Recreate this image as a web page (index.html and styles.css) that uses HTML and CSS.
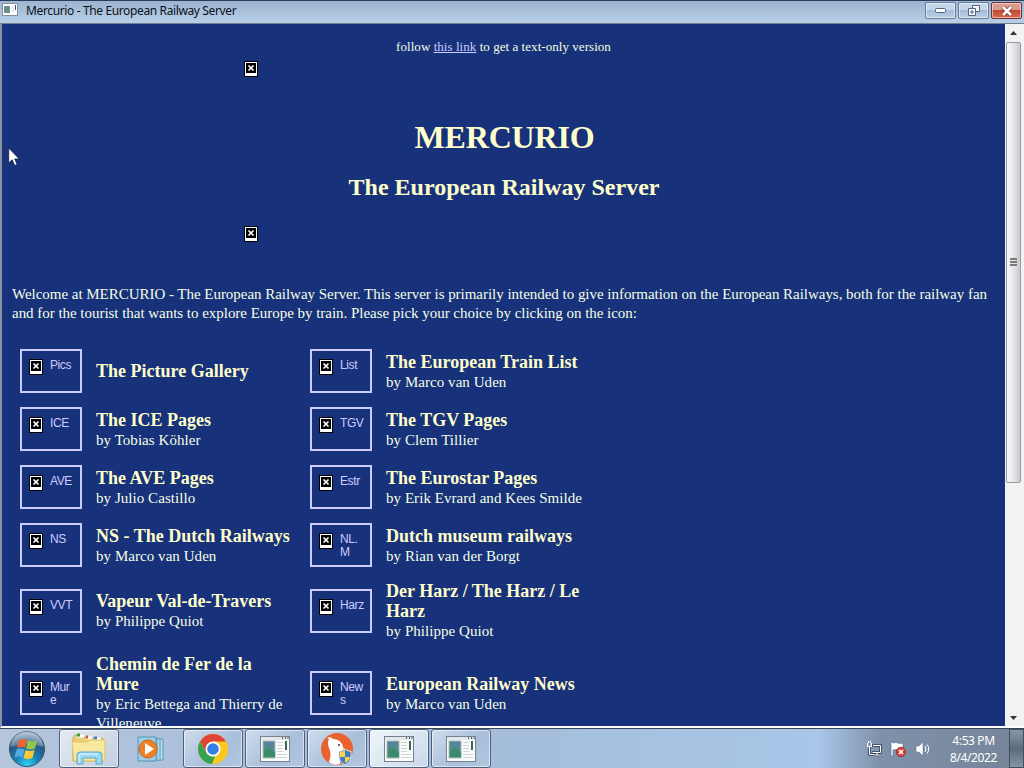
FILE: index.html
```html
<!DOCTYPE html>
<html lang="en">
<head>
    <meta charset="UTF-8">
    <meta name="viewport" content="width=device-width, initial-scale=1.0">
    <title>Mercurio - The European Railway Server</title>
    <link rel="stylesheet" href="styles.css">
</head>
<body>
    <!-- shared icons -->
    <svg class="defs" width="0" height="0">
        <defs>
            <linearGradient id="photo" x1="0" y1="0" x2="0" y2="1">
                <stop offset="0" stop-color="#587fa0"/>
                <stop offset="1" stop-color="#4b9a78"/>
            </linearGradient>
            <symbol id="window" viewBox="0 0 30 26">
                <rect x=".5" y=".5" width="29" height="25" fill="#fafbfb" stroke="#77828c"/>
                <path d="M1 2.500H29" stroke="#e3e8ec" stroke-width="3"/>
                <path d="M22 2h1M25 2h1M27.500 2h1" stroke="#333" stroke-width="1.500"/>
                <rect x="3" y="5" width="12" height="17" fill="url(#photo)" stroke="#a6bab6"/>
                <path d="M4 15l5-4 6 5v5H4z" fill="#3d8a6b"/>
                <path d="M17 6.500h6M17 9.500h6M17 12.500h6M17 15.500h6M17 18.500h10M17 21.500h10" stroke="#cfd3d6"/>
                <rect x="25" y="5" width="2" height="9" fill="#3e6558"/>
            </symbol>
            <symbol id="broken" viewBox="0 0 14 16">
                <path fill="#000" d="M0 0h14v16H0z"/>
                <path fill="#fff" d="M1 1h12v14H1z"/>
                <path fill="#000" d="M2 2h10v10H2z"/>
                <path d="M4.500 4.500l5 5M9.500 4.500l-5 5" stroke="#fff" stroke-width="1.700"/>
            </symbol>
        </defs>
    </svg>

    <div class="titlebar">
        <svg class="app-icon" width="16" height="13" viewBox="0 0 16 13"><rect x=".5" y=".5" width="15" height="12" fill="#fff" stroke="#8390a0"/><rect x="2" y="3" width="6" height="7" fill="#6d8f90"/><path d="M10 4h2M10 6h2M10 8h2" stroke="#ccd"/><path d="M13.500 2v5" stroke="#456"/></svg>
        <span class="title">Mercurio - The European Railway Server</span>
        <div class="controls">
            <span class="control"><svg width="12" height="6"><rect x=".5" y=".5" width="10" height="4" rx="1" fill="#fff" stroke="#53647c"/></svg></span>
            <span class="control"><svg width="12" height="11" fill="#f4f8fc" stroke="#53647c"><path d="M4.500.5h7v6h-7z"/><path d="M.5 3.500h7v7h-7z"/><path d="M3 6h2v2H3z"/></svg></span>
            <span class="control close"><svg width="12" height="10" viewBox="0 0 12 10"><path d="M2 1l8 8M10 1L2 9" stroke="#6f3637" stroke-width="4"/><path d="M2 1l8 8M10 1L2 9" stroke="#fff" stroke-width="2.500"/></svg></span>
        </div>
    </div>

    <div class="viewport">
        <div class="page">
            <p class="text-only">follow <a href="#">this link</a> to get a text-only version</p>
            <div class="banner">
                <svg class="broken" width="14" height="16"><use href="#broken"/></svg>
                <h1>MERCURIO</h1>
                <h2>The European Railway Server</h2>
                <svg class="broken" width="14" height="16"><use href="#broken"/></svg>
            </div>
            <p class="intro">Welcome at MERCURIO - The European Railway Server. This server is primarily intended to give information on the European Railways, both for the railway fan<br>and for the tourist that wants to explore Europe by train. Please pick your choice by clicking on the icon:</p>

            <div class="links">
                <a class="pic" href="#"><svg width="14" height="16"><use href="#broken"/></svg><span>Pics</span></a>
                <div><h3>The Picture Gallery</h3></div>
                <a class="pic" href="#"><svg width="14" height="16"><use href="#broken"/></svg><span>List</span></a>
                <div class="entry"><h3>The European Train List</h3><p>by Marco van Uden</p></div>

                <a class="pic" href="#"><svg width="14" height="16"><use href="#broken"/></svg><span>ICE</span></a>
                <div class="entry"><h3>The ICE Pages</h3><p>by Tobias Köhler</p></div>
                <a class="pic" href="#"><svg width="14" height="16"><use href="#broken"/></svg><span>TGV</span></a>
                <div class="entry"><h3>The TGV Pages</h3><p>by Clem Tillier</p></div>

                <a class="pic" href="#"><svg width="14" height="16"><use href="#broken"/></svg><span>AVE</span></a>
                <div class="entry"><h3>The AVE Pages</h3><p>by Julio Castillo</p></div>
                <a class="pic" href="#"><svg width="14" height="16"><use href="#broken"/></svg><span>Estr</span></a>
                <div class="entry"><h3>The Eurostar Pages</h3><p>by Erik Evrard and Kees Smilde</p></div>

                <a class="pic" href="#"><svg width="14" height="16"><use href="#broken"/></svg><span>NS</span></a>
                <div class="entry"><h3>NS - The Dutch Railways</h3><p>by Marco van Uden</p></div>
                <a class="pic" href="#"><svg width="14" height="16"><use href="#broken"/></svg><span>NL.<br>M</span></a>
                <div class="entry"><h3>Dutch museum railways</h3><p>by Rian van der Borgt</p></div>

                <a class="pic" href="#"><svg width="14" height="16"><use href="#broken"/></svg><span>VVT</span></a>
                <div><h3>Vapeur Val-de-Travers</h3><p>by Philippe Quiot</p></div>
                <a class="pic" href="#"><svg width="14" height="16"><use href="#broken"/></svg><span>Harz</span></a>
                <div><h3>Der Harz / The Harz / Le<br>Harz</h3><p>by Philippe Quiot</p></div>

                <a class="pic" href="#"><svg width="14" height="16"><use href="#broken"/></svg><span>Mur<br>e</span></a>
                <div><h3>Chemin de Fer de la<br>Mure</h3><p>by Eric Bettega and Thierry de<br>Villeneuve</p></div>
                <a class="pic" href="#"><svg width="14" height="16"><use href="#broken"/></svg><span>New<br>s</span></a>
                <div class="entry"><h3>European Railway News</h3><p>by Marco van Uden</p></div>
            </div>
        </div>
        <div class="scrollbar">
            <svg class="arrow" width="7" height="4"><path d="M0 4l3.500-4L7 4z" fill="#333"/></svg>
            <div class="thumb"><svg width="8" height="9"><path d="M0 1h7M0 4h7M0 7h7" stroke="#555" stroke-width="1.500"/></svg></div>
            <svg class="arrow down" width="7" height="4"><path d="M0 0l3.500 4L7 0z" fill="#333"/></svg>
        </div>
    </div>

    <div class="taskbar">
        <div class="start">
            <svg width="38" height="38" viewBox="0 0 38 38">
                <defs>
                    <radialGradient id="orb" cx=".5" cy=".95" r=".95"><stop offset="0" stop-color="#35d5f4"/><stop offset=".35" stop-color="#1681b5"/><stop offset=".7" stop-color="#28577f"/><stop offset="1" stop-color="#a9bfd0"/></radialGradient>
                </defs>
                <circle cx="19" cy="19" r="17.500" fill="url(#orb)" stroke="#36536c"/>
                <path d="M3 17a16 16 0 0132 0q-16-7-32 0z" fill="#fff" opacity=".28"/>
                <path d="M11 10q4-2 8 0l-2 8q-4-2-8 0z" fill="#ee6430"/>
                <path d="M20 10.500q4 2 9 0l-2 8q-5 2-9 0z" fill="#91c84c"/>
                <path d="M8.500 19.500q4-2 8 0l-2 8q-4-2-8 0z" fill="#55a9e5"/>
                <path d="M17.500 20q4 2 9 0l-2 8q-5 2-9 0z" fill="#fbc83a"/>
            </svg>
        </div>
        <div class="task explorer">
            <svg width="36" height="32" viewBox="0 0 36 32">
                <path d="M2 28V5l2-3h8l2 3h17l2 2v21z" fill="#e9cf74" stroke="#c9a94c"/>
                <path d="M6 3h7M15 5h6M23 6h7" stroke="#fff" stroke-width="3"/>
                <path d="M6 2h3" stroke="#3a9a4a" stroke-width="3"/><path d="M15 4h2" stroke="#d64c31" stroke-width="3"/><path d="M23 5h3" stroke="#437fc4" stroke-width="3"/>
                <path d="M1 9h15l3-2h15v21H3z" fill="#f8e8a0" stroke="#dec46c"/>
                <path d="M6 31V22q0-3 3-3h19q3 0 3 3v9h-6v-6H12v6z" fill="#9bd9ef" stroke="#58a6c9"/>
                <path d="M8 30v-7q0-2 2-2h17" fill="none" stroke="#e6faff"/>
            </svg>
        </div>
        <div class="task plain">
            <svg width="28" height="26" viewBox="0 0 28 26">
                <path d="M7 2l19 1v21L7 25z" fill="#b9d9eb" stroke="#5a9bbd"/><path d="M20 2v22M23 2v22" stroke="#5a9bbd"/>
                <path d="M1 1h18v24H1z" fill="#9dcce6" stroke="#5594bb"/>
                <circle cx="11" cy="13" r="9" fill="#ef8125" stroke="#d0641b"/>
                <path d="M8 7l9 6-9 6z" fill="#fff"/>
            </svg>
        </div>
        <div class="task">
            <svg width="32" height="32" viewBox="0 0 32 32">
                <circle cx="16" cy="16" r="15" fill="#fbc91c"/>
                <path d="M3 8.500A15 15 0 0129 8.500H16L9.500 20z" fill="#df4534"/>
                <path d="M3 8.500l6.500 11.500q2.500 4 8.500 3.500L15 31A15 15 0 013 8.500z" fill="#34a350"/>
                <circle cx="16" cy="16" r="7.500" fill="#fff"/><circle cx="16" cy="16" r="5.800" fill="#347ee8"/>
            </svg>
        </div>
        <div class="task"><svg width="30" height="26"><use href="#window"/></svg></div>
        <div class="task">
            <svg width="34" height="34" viewBox="0 0 34 34">
                <circle cx="17" cy="17" r="16" fill="#e9612e"/>
                <path d="M7 6q4-2 6 1 8 0 10 8l3 5-6 2v10q-7 2-11-2 3-8 0-14-2-5 0-9z" fill="#fff"/>
                <circle cx="19" cy="13" r="1" fill="#333"/><path d="M23 16l5 2-6 3z" fill="#f6bd38"/>
                <path d="M25 17q3 3 6 2v6q0 5-6 8-6-3-6-8v-6q3 1 6-2z" fill="#3e7bc3" stroke="#d8e4eb"/>
                <path d="M25 18v7h-5v-5q3 0 5-2zM25 25h5q-1 4-5 6z" fill="#f7d44a"/>
            </svg>
        </div>
        <div class="task active"><svg width="30" height="26"><use href="#window"/></svg></div>
        <div class="task"><svg width="30" height="26"><use href="#window"/></svg></div>
        <div class="tray">
            <svg width="16" height="16" viewBox="0 0 16 16" fill="none"><path d="M6 4.500h8.500v7H6M8 14h6M3.500 6v7.500H8" stroke="#334356" stroke-width="2.500"/><path d="M7 4.500h7.500v7H6.500M8 14h6M11 12v2M3.500 6v7.500H8M1.500 2v3.500h4V2M2.500 0v2M4.500 0v2" stroke="#fff"/></svg>
            <svg width="17" height="16" viewBox="0 0 17 16"><path d="M1 1h2v1q3-1 5 0t5 0v7q-3 1-5 0t-5 0v6H1z" fill="#fff" stroke="#5b6a7c" stroke-width=".6"/><circle cx="11" cy="11" r="4.700" fill="#d8453c" stroke="#a52f2d"/><path d="M9 9l4 4M13 9l-4 4" stroke="#fff" stroke-width="1.600"/></svg>
            <svg width="17" height="16" viewBox="0 0 17 16"><path d="M1 5h3l4-4v14l-4-4H1z" fill="#fff" stroke="#667587" stroke-width=".6"/><path d="M10 5q2 3 0 6M12 3.500q3.500 4.500 0 9" fill="none" stroke="#fff"/></svg>
        </div>
        <div class="clock">4:53 PM<br>8/4/2022</div>
        <div class="show-desktop"></div>
    </div>

    <svg class="cursor" width="12" height="20" viewBox="0 0 12 20"><path d="M.7 1v15l3.500-3.200 2.500 5.700 2.500-1.100-2.500-5.400h4.600z" fill="#fff" stroke="#101c3c" stroke-width=".8"/></svg>
</body>
</html>
```

FILE: styles.css
```css
* {
    box-sizing: border-box;
}
body {
    margin: 0;
    width: 1024px;
    height: 768px;
    overflow: hidden;
    display: flex;
    flex-direction: column;
    font-family: "Liberation Serif", serif;
    background-color: #17317a;
}
svg {
    display: block;
    flex: none;
}
.defs {
    position: absolute;
}
h1, h2, h3, p {
    margin: 0;
    white-space: nowrap;
}

/* window frame */
.titlebar {
    height: 24px;
    flex: none;
    display: flex;
    align-items: flex-start;
    padding-left: 2px;
    border-top: 1px solid #263c58;
    border-bottom: 1px solid #73808d;
    background: linear-gradient(#9bb4d0, #afc6df 65%, #b8cfe7);
}
.app-icon {
    margin-top: 2px;
}
.title {
    margin: 2px 0 0 8px;
    font: 12px/16px "Noto Sans", sans-serif;
    letter-spacing: -0.37px;
    color: #0b1119;
}
.controls {
    display: flex;
    gap: 2px;
    margin: 1px 2px 0 auto;
}
.control {
    width: 31px;
    height: 17px;
    display: flex;
    align-items: center;
    justify-content: center;
    border: 1px solid #667d9b;
    border-radius: 2px;
    box-shadow: inset 0 0 0 1px rgba(255,255,255,0.5);
    background: linear-gradient(#c4d6e9 45%, #a4bcd7 50%, #bad0e6);
}
.close {
    border-color: #6f3035;
    background: linear-gradient(#dc9990 45%, #bf4934 50%, #d86a51);
}
.viewport {
    height: 704px;
    flex: none;
    display: flex;
    overflow: hidden;
    border-left: 2px solid #8794a5;
    border-bottom: 2px solid #fff;
}

/* page */
.page {
    width: 1003px;
    padding: 14px 10px 0;
    color: #ffffcc;
    background-color: #17317a;
}
.text-only {
    text-align: center;
    font-size: 13px;
    line-height: 18px;
    letter-spacing: 0.05px;
    color: #f4ffe5;
}
a {
    color: #ccccff;
}
.banner {
    width: 520px;
    height: 229px;
    margin: 5px auto 0;
    text-align: center;
}
h1 {
    margin-top: 41px;
    padding-left: 2px;
    font-size: 32px;
    line-height: 38px;
    letter-spacing: -0.15px;
}
h2 {
    margin: 17px 0 25px;
    padding-left: 1px;
    font-size: 24px;
    line-height: 28px;
}
.intro {
    margin-top: -5px;
    font-size: 15px;
    line-height: 19px;
    letter-spacing: -0.03px;
    color: #f4ffe5;
}
.links {
    display: grid;
    grid-template-columns: 62px 200px 62px 220px;
    grid-template-rows: 58px 58px 58px 58px 74px 90px;
    column-gap: 14px;
    align-items: center;
    margin: 19px 0 0 8px;
}
.pic {
    width: 62px;
    height: 44px;
    display: flex;
    gap: 7px;
    padding: 8px 0 0 7px;
    border: 2px solid #ccccff;
    font: 12px/13px "Liberation Sans", sans-serif;
    letter-spacing: -0.4px;
    text-decoration: none;
}
.entry {
    padding-top: 2px;
}
h3 {
    font-size: 18px;
    line-height: 20px;
}
.links p {
    margin-top: 1px;
    font-size: 15px;
    line-height: 19px;
    letter-spacing: 0.05px;
    color: #f4ffe5;
}

/* scrollbar */
.scrollbar {
    flex: 1;
    display: flex;
    flex-direction: column;
    align-items: center;
    padding: 7px 2px 6px 0;
    background-color: #f2f2f3;
}
.thumb {
    width: 15px;
    height: 441px;
    margin-top: 7px;
    display: flex;
    align-items: center;
    justify-content: center;
    border: 1px solid #999ba1;
    border-radius: 2px;
    background: linear-gradient(90deg, #f9f9fa, #e9e9ec 45%, #c8c9d0);
}
.down {
    margin-top: auto;
}

/* taskbar */
.taskbar {
    flex: 1;
    display: flex;
    align-items: center;
    border-top: 1px solid #35445b;
    background: linear-gradient(90deg, #b5c6dc 0, #adc1db 16%, #a4bddb 50%, #a9c6e8 80%, #7e91aa 86%, #778498 100%);
}
.start {
    width: 54px;
    padding-left: 8px;
}
.task {
    width: 60px;
    height: 39px;
    margin-right: 2px;
    display: flex;
    align-items: center;
    justify-content: center;
    border: 1px solid #4d617d;
    border-radius: 3px;
    box-shadow: inset 0 0 0 1px rgba(255,255,255,0.55);
    background: linear-gradient(135deg, #d0dced, #a8bed9 60%, #b3c8e1);
}
.explorer {
    margin-left: 5px;
    background: linear-gradient(135deg, #e4eaf1, #c2cfdf);
}
.plain {
    border-color: transparent;
    box-shadow: none;
    background: none;
}
.active {
    background: linear-gradient(135deg, #f0f5fa, #c7d8eb);
}
.tray {
    display: flex;
    gap: 8px;
    margin: 0 6px 0 auto;
}
.clock {
    width: 71px;
    text-align: center;
    font: 12px/17px "Noto Sans", sans-serif;
    letter-spacing: -0.4px;
    color: #fff;
}
.show-desktop {
    width: 15px;
    height: 100%;
    border: 1px solid #3f4e61;
    background: linear-gradient(#8896a8, #5b6b7e 50%, #8695a6);
}
.cursor {
    position: absolute;
    left: 8px;
    top: 147px;
}
```
